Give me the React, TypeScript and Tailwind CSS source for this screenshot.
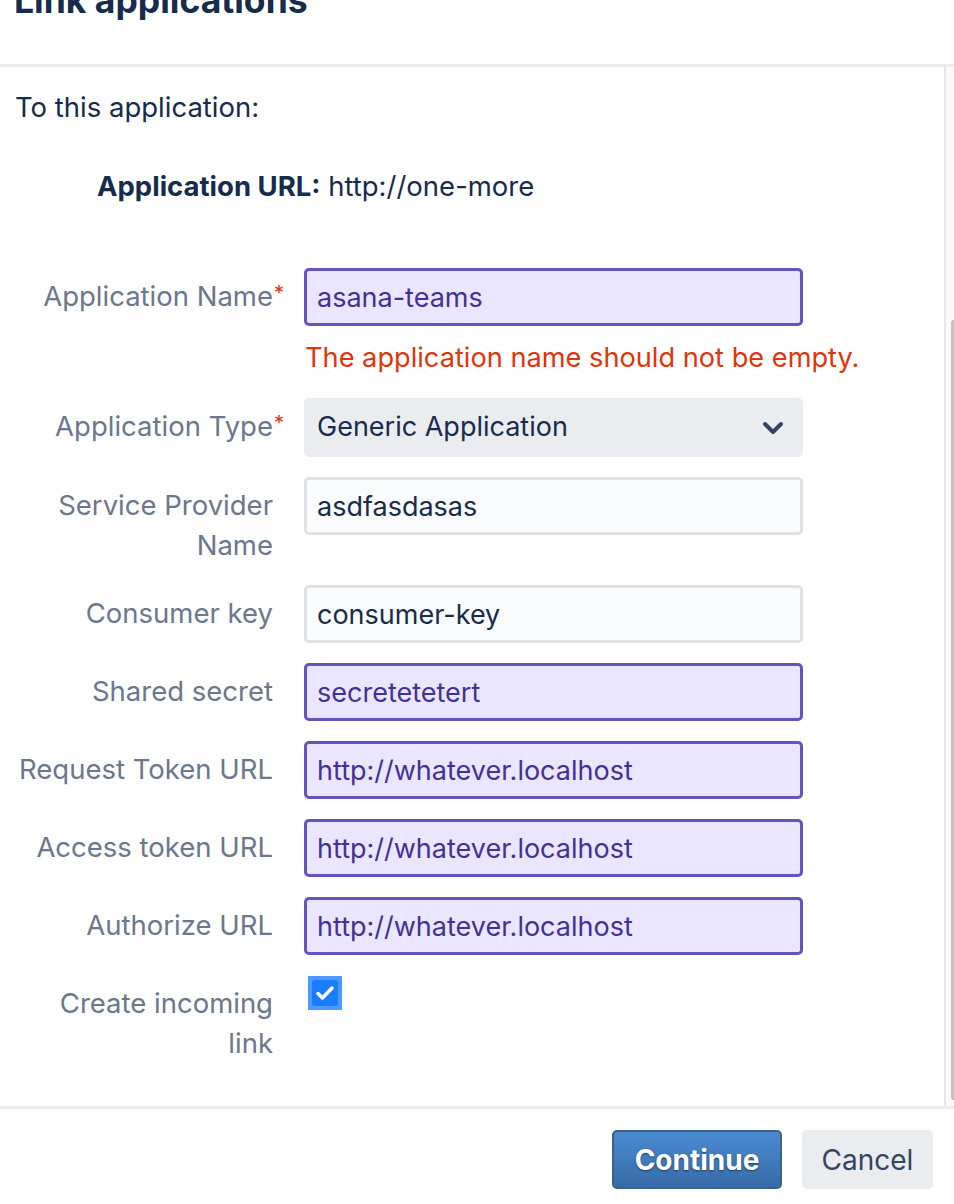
import { ChevronDown } from 'lucide-react';

type Field = {
  label: string[];
  value: string;
  kind: 'active' | 'plain' | 'select';
  required?: boolean;
  error?: string;
};

const fields: Field[] = [
  { label: ['Application Name'], value: 'asana-teams', kind: 'active', required: true, error: 'The application name should not be empty.' },
  { label: ['Application Type'], value: 'Generic Application', kind: 'select', required: true },
  { label: ['Service Provider', 'Name'], value: 'asdfasdasas', kind: 'plain' },
  { label: ['Consumer key'], value: 'consumer-key', kind: 'plain' },
  { label: ['Shared secret'], value: 'secretetetert', kind: 'active' },
  { label: ['Request Token URL'], value: 'http://whatever.localhost', kind: 'active' },
  { label: ['Access token URL'], value: 'http://whatever.localhost', kind: 'active' },
  { label: ['Authorize URL'], value: 'http://whatever.localhost', kind: 'active' },
];

function Label({ lines, required }: { lines: string[]; required?: boolean }) {
  return (
    <div className="w-[273px] shrink-0 pt-[8px] text-right text-[27.5px] leading-[40px] text-[#6b778c]">
      {lines.map((l, i) => (
        <div key={i} className="whitespace-nowrap">
          <span className="relative">
            {l}
            {required && i === lines.length - 1 && (
              <span className="absolute left-full top-[-6px] pl-[1px] text-[20px] text-[#de350b]">*</span>
            )}
          </span>
        </div>
      ))}
    </div>
  );
}

function Control({ f }: { f: Field }) {
  if (f.kind === 'select') {
    return (
      <div className="flex h-[59px] items-center justify-between rounded-[5px] bg-[#ebecf0] pl-[13px] pr-[14px] text-[27px] text-[#172b4d]">
        <span>{f.value}</span>
        <ChevronDown size={32} strokeWidth={3} className="text-[#344563]" />
      </div>
    );
  }
  const active = f.kind === 'active';
  return (
    <input
      readOnly
      value={f.value}
      className={`block h-[58px] w-full rounded-[5px] border-[3px] px-[10px] text-[27px] outline-none ${
        active ? 'border-[#6554c0] bg-[#eae6ff] text-[#403294]' : 'border-[#dfe1e6] bg-[#fafbfc] text-[#172b4d]'
      }`}
    />
  );
}

export default function App() {
  return (
    <div className="h-[1204px] w-[954px] overflow-hidden bg-white font-['Inter','Liberation_Sans',sans-serif] text-[#172b4d]">
      {/* titre coupé en haut */}
      <header className="h-[64px] overflow-hidden px-[14px]">
        <h1 className="mt-[-19px] text-[35.5px] font-bold leading-[40px] text-[#172b4d]">Link applications</h1>
      </header>
      <div className="h-[3px] bg-[#ebecf0]" />

      <div className="flex h-[1039px]">
        <div className="flex-1 bg-[#fefefe]">
          <p className="pl-[15px] pt-[20px] text-[27.5px] leading-[40px]">To this application:</p>
          <p className="mt-[39px] pl-[97px] text-[27.5px] leading-[40px]">
            <span className="font-bold">Application URL:</span> http://one-more
          </p>

          <div className="mt-[62px]">
            {fields.map((f) => (
              <div key={f.label.join(' ')} className="mb-[20px] flex items-start">
                <Label lines={f.label} required={f.required} />
                <div className="ml-[31px] w-[499px]">
                  <Control f={f} />
                  {f.error && (
                    <div className="mt-[12px] whitespace-nowrap pl-[1px] text-[27.2px] leading-[40px] text-[#de350b]">
                      {f.error}
                    </div>
                  )}
                </div>
              </div>
            ))}

            <div className="flex items-start">
              <Label lines={['Create incoming', 'link']} />
              <div className="ml-[35px] pt-[1px]">
                <div className="h-[34px] w-[34px] bg-[#4c9aff] p-[4px]">
                  <div className="flex h-[26px] w-[26px] items-center justify-center rounded-[3px] bg-[#1a7cff]">
                    <svg width="22" height="22" viewBox="0 0 22 22" fill="none">
                      <path d="M4 11.5l4.5 4.5 9.5-10" stroke="white" strokeWidth="3.5" strokeLinecap="round" strokeLinejoin="round" />
                    </svg>
                  </div>
                </div>
              </div>
            </div>
          </div>
        </div>
        <div className="w-[2px] bg-[#e6e6e6]" />
        <div className="flex w-[8px] flex-col items-end bg-[#fafafa] pt-[253px]">
          <div className="h-[780px] w-[3px] rounded-l-full bg-[#c1c1c1]" />
        </div>
      </div>
      <div className="h-[3px] bg-[#ebecf0]" />

      <footer className="flex justify-end gap-[20px] pr-[21px] pt-[21px]">
        <button className="h-[59px] w-[170px] rounded-[5px] border-2 border-[#3d6187] bg-gradient-to-b from-[#4b8bd2] to-[#376ba6] text-[28px] font-bold text-white [text-shadow:0_1px_2px_rgba(0,0,0,0.5)]">
          Continue
        </button>
        <button className="h-[59px] w-[131px] rounded-[5px] bg-[#ebecf0] text-[28px] text-[#344563]">Cancel</button>
      </footer>
    </div>
  );
}
